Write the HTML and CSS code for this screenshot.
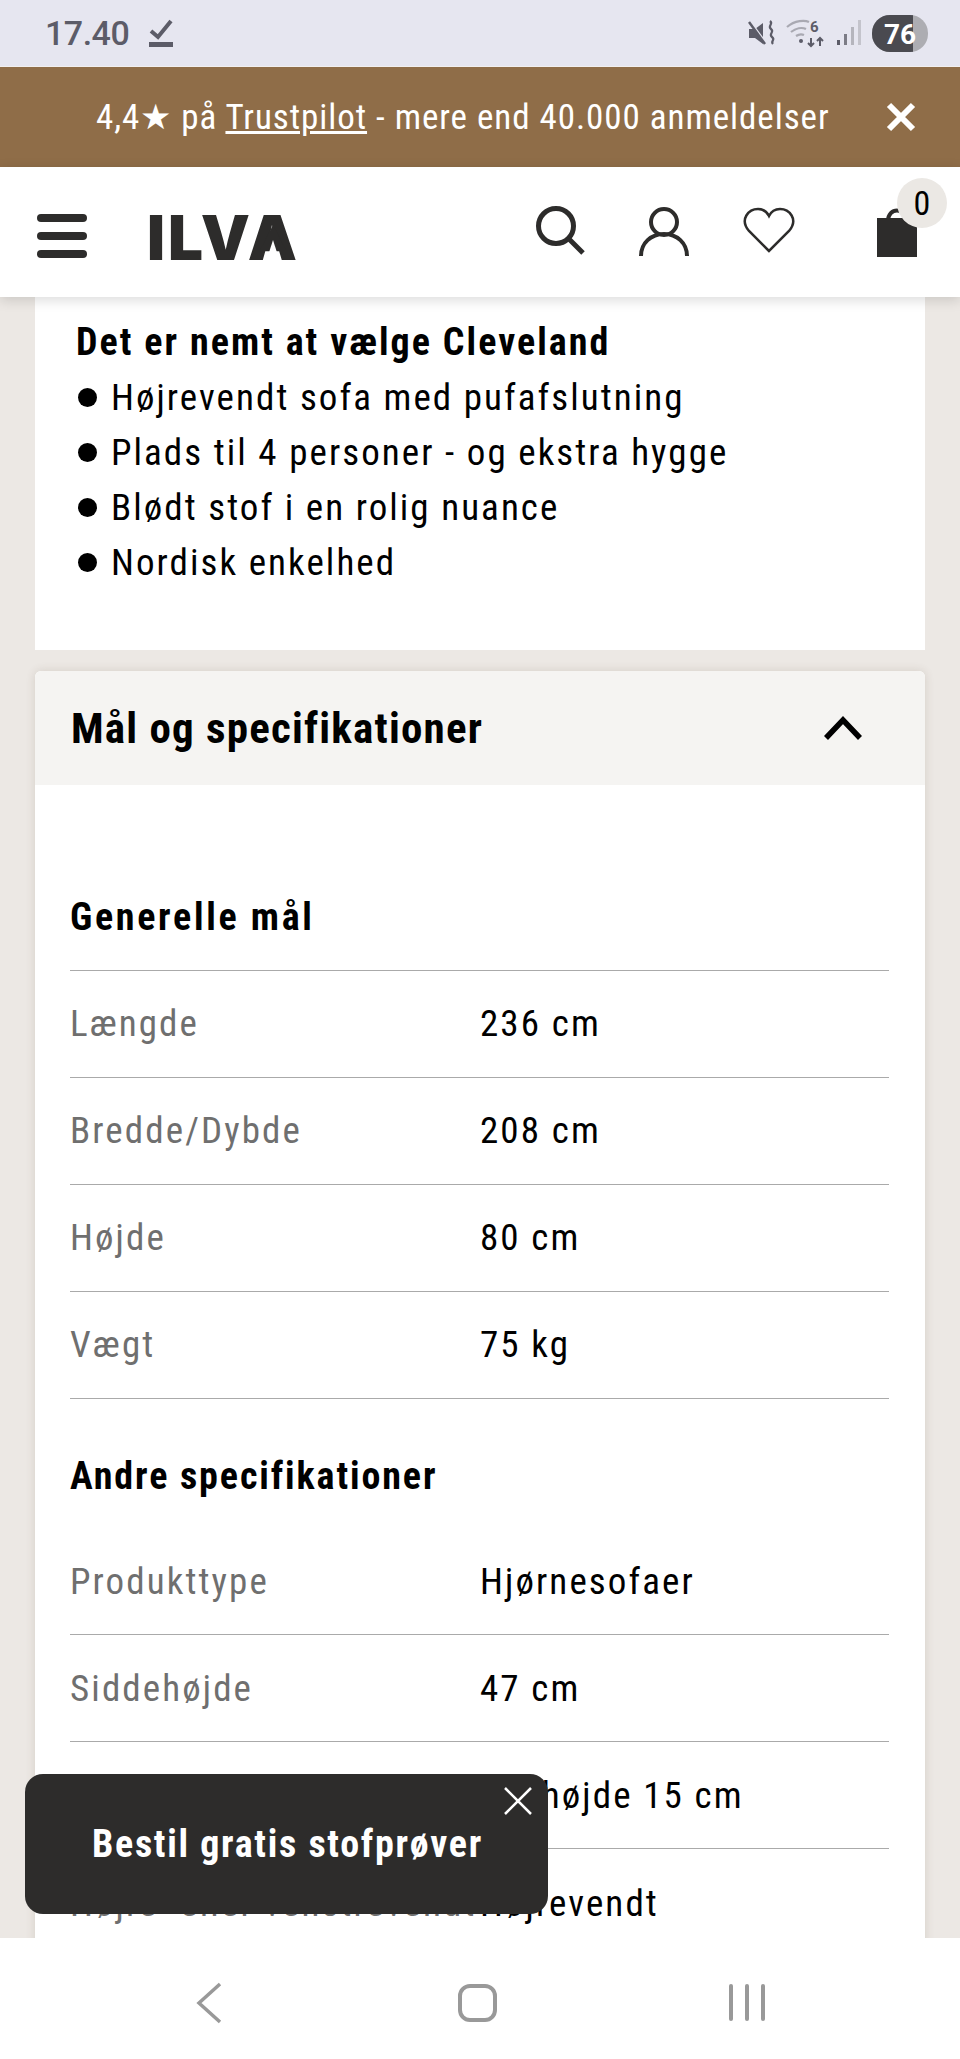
FILE: index.html
```html
<!DOCTYPE html>
<html lang="da">
<head>
    <meta charset="UTF-8">
    <title>ILVA - Cleveland</title>
    <link rel="stylesheet" href="styles.css">
</head>
<body>
<div class="page">
    <div class="statusbar">
        <div class="status-left">
            <span class="time">17.40</span>
            <svg class="status-check" width="26" height="30" viewBox="0 0 26 30"><path d="M3 13l7 6L23 3" fill="none" stroke="#5c5c68" stroke-width="4"/><rect x="1" y="24" width="24" height="5" fill="#5c5c68"/></svg>
        </div>
        <div class="status-right">
            <svg width="28" height="28" viewBox="0 0 28 28"><path d="M1 10h6l8-6v21l-8-6H1z" fill="#5c5c68"/><path d="M2 2l16 22" stroke="#e6e6f0" stroke-width="2"/><path d="M1 3l16 22" stroke="#5c5c68" stroke-width="2.5"/><path d="M22 2c4 3-3 5 1 8s-3 5 1 8-2 4 1 7" fill="none" stroke="#5c5c68" stroke-width="2.2"/></svg>
            <svg width="40" height="30" viewBox="0 0 40 30"><path d="M1 9c8-7 18-7 22-5M5 14c5-4 11-5 15-3M10 18c3-2 6-2 8-1" fill="none" stroke="#a9a9b2" stroke-width="2.2"/><circle cx="15" cy="23" r="2" fill="#5c5c68"/><path d="M25 20v8M22 25l3 3 3-3M34 28v-8M31 23l3-3 3 3" fill="none" stroke="#5c5c68" stroke-width="2"/><text x="24" y="14" class="wifi-six">6</text></svg>
            <svg width="26" height="28" viewBox="0 0 26 28"><rect x="1" y="21" width="3" height="5" fill="#5c5c68"/><rect x="8" y="15" width="3" height="11" fill="#7c7c86"/><rect x="15" y="8" width="3" height="18" fill="#b5b5bd"/><rect x="22" y="1" width="3" height="25" fill="#c4c4cc"/></svg>
            <div class="battery"><span class="battery-fill"></span><span class="battery-num">76</span></div>
        </div>
    </div>

    <div class="promo">
        <p class="promo-text">4,4★ på <a href="#">Trustpilot</a> - mere end 40.000 anmeldelser</p>
        <svg class="promo-close" width="30" height="30" viewBox="0 0 30 30"><path d="M3 3l24 24M27 3L3 27" stroke="#fff" stroke-width="6"/></svg>
    </div>

    <header class="header">
        <div class="burger"><span></span><span></span><span></span></div>
        <div class="logo">ILVA</div>
        <div class="header-icons">
            <svg class="ico-search" width="52" height="52" viewBox="0 0 52 52"><circle cx="21" cy="21" r="17.5" fill="none" stroke="#2d2c2b" stroke-width="5"/><path d="M33 33l15 15" stroke="#2d2c2b" stroke-width="5"/></svg>
            <svg class="ico-user" width="52" height="50" viewBox="0 0 52 50"><circle cx="26" cy="15" r="13" fill="none" stroke="#2d2c2b" stroke-width="4"/><path d="M3 49c0-13 10-22 23-22s23 9 23 22" fill="none" stroke="#2d2c2b" stroke-width="4"/></svg>
            <svg class="ico-heart" width="52" height="46" viewBox="0 0 52 46"><path d="M26 44L6 24C-4 12 6 2 15 2c5 0 9 3 11 7 2-4 6-7 11-7 9 0 19 10 9 22z" fill="none" stroke="#2d2c2b" stroke-width="2.5"/></svg>
            <div class="bag">
                <svg width="42" height="50" viewBox="0 0 42 50"><path d="M12 14c0-14 18-14 18 0" fill="none" stroke="#2d2c2b" stroke-width="4"/><rect x="1" y="11" width="40" height="39" fill="#2d2c2b"/></svg>
                <span class="bag-count">0</span>
            </div>
        </div>
    </header>

    <main class="content">
        <section class="card intro">
            <h4 class="intro-title">Det er nemt at vælge Cleveland</h4>
            <ul class="usp">
                <li>Højrevendt sofa med pufafslutning</li>
                <li>Plads til 4 personer - og ekstra hygge</li>
                <li>Blødt stof i en rolig nuance</li>
                <li>Nordisk enkelhed</li>
            </ul>
        </section>

        <section class="card accordion">
            <div class="acc-head">
                <h2 class="acc-title">Mål og specifikationer</h2>
                <svg width="38" height="24" viewBox="0 0 38 24"><path d="M2 22L19 4l17 18" fill="none" stroke="#000" stroke-width="5.5"/></svg>
            </div>
            <div class="acc-body">
                <h3 class="spec-title first">Generelle mål</h3>
                <div class="spec-row"><span class="spec-label">Længde</span><span class="spec-value">236 cm</span></div>
                <div class="spec-row"><span class="spec-label">Bredde/Dybde</span><span class="spec-value">208 cm</span></div>
                <div class="spec-row"><span class="spec-label">Højde</span><span class="spec-value">80 cm</span></div>
                <div class="spec-row"><span class="spec-label">Vægt</span><span class="spec-value">75 kg</span></div>
                <h3 class="spec-title second">Andre specifikationer</h3>
                <div class="spec-row"><span class="spec-label">Produkttype</span><span class="spec-value">Hjørnesofaer</span></div>
                <div class="spec-row"><span class="spec-label">Siddehøjde</span><span class="spec-value">47 cm</span></div>
                <div class="spec-row"><span class="spec-label">Ben</span><span class="spec-value">Benhøjde 15 cm</span></div>
                <div class="spec-row"><span class="spec-label">Højre- eller venstrevendt</span><span class="spec-value">Højrevendt</span></div>
            </div>
        </section>

        <div class="toast">
            <span class="toast-text">Bestil gratis stofprøver</span>
            <svg class="toast-close" width="30" height="30" viewBox="0 0 30 30"><path d="M2 2l26 26M28 2L2 28" stroke="#fff" stroke-width="2.5"/></svg>
        </div>
    </main>

    <nav class="navbar">
        <svg width="26" height="42" viewBox="0 0 26 42"><path d="M24 2L3 21l21 19" fill="none" stroke="#999" stroke-width="3.5"/></svg>
        <div class="nav-home"></div>
        <div class="nav-recent"><span></span><span></span><span></span></div>
    </nav>
</div>
</body>
</html>
```

FILE: styles.css
```css
*{
    box-sizing: border-box;
}
body{
    margin: 0px;
    font-family: Roboto, "Liberation Sans", sans-serif;
    font-stretch: 75%;
    color: #000;
}
.page{
    width: 960px;
    height: 2059px;
    display: flex;
    flex-direction: column;
    overflow: hidden;
}

/* phone status bar */
.statusbar{
    height: 67px;
    background-color: #e6e6f0;
    border-bottom: 1px solid #f2f0f0;
    display: flex;
    justify-content: space-between;
    align-items: center;
    padding: 0px 32px 0px 45px;
    font-stretch: 100%;
}
.status-left{
    display: flex;
    align-items: center;
    gap: 19px;
}
.time{
    font-family: Roboto, sans-serif;
    font-size: 34px;
    font-weight: 500;
    color: #5c5c68;
    letter-spacing: -0.5px;
}
.status-right{
    display: flex;
    align-items: center;
    gap: 10px;
}
.wifi-six{
    font-family: Roboto, sans-serif;
    font-size: 15px;
    font-weight: 700;
    fill: #5c5c68;
}
.battery{
    position: relative;
    width: 56px;
    height: 37px;
    border-radius: 18px;
    background-color: #adadb2;
    overflow: hidden;
}
.battery-fill{
    position: absolute;
    left: 0px;
    top: 0px;
    bottom: 0px;
    width: 41px;
    background-color: #4a4a50;
}
.battery-num{
    position: absolute;
    left: 12px;
    top: 3px;
    font-family: Roboto, sans-serif;
    font-size: 28px;
    font-weight: 700;
    color: #fff;
}

/* brown promo bar */
.promo{
    height: 100px;
    background-color: #8f6d48;
    display: flex;
    align-items: center;
    padding: 0px 44px 0px 96px;
    justify-content: space-between;
    color: #fff;
}
.promo-text{
    margin: 0px;
    font-size: 35px;
    letter-spacing: 0.95px;
    white-space: nowrap;
}
.promo-text a{
    color: #fff;
}
.promo-close{
    flex-shrink: 0;
}

/* main header */
.header{
    height: 130px;
    background-color: #fff;
    display: flex;
    align-items: center;
    padding: 0px 37px;
    box-shadow: 0px 3px 12px rgba(0, 0, 0, 0.15);
    position: relative;
    z-index: 2;
}
.burger{
    width: 50px;
    display: flex;
    flex-direction: column;
    gap: 10px;
    margin-top: 8px;
}
.burger span{
    height: 8px;
    border-radius: 4px;
    background-color: #2d2c2b;
}
.logo{
    position: relative;
    margin-left: 60px;
    margin-top: 12px;
    font-family: Inter, "Liberation Sans", sans-serif;
    font-stretch: 100%;
    font-size: 62px;
    font-weight: 900;
    line-height: 62px;
    color: #2d2c2b;
    letter-spacing: 3px;
}
/* the logo's A has no crossbar, only a notch at the foot */
.logo::before{
    content: "";
    position: absolute;
    left: 113px;
    top: 18px;
    width: 26px;
    height: 25px;
    background-color: #2d2c2b;
    clip-path: polygon(50% 0%, 100% 100%, 0% 100%);
}
.logo::after{
    content: "";
    position: absolute;
    left: 119px;
    top: 33px;
    width: 14px;
    height: 22px;
    background-color: #fff;
    clip-path: polygon(50% 0%, 100% 100%, 0% 100%);
}
.header-icons{
    margin-left: auto;
    display: flex;
    align-items: flex-end;
    height: 50px;
}
.ico-search{
    margin-right: 51px;
}
.ico-user{
    margin-right: 53px;
}
.ico-heart{
    margin-right: 81px;
    margin-bottom: 4px;
}
.bag{
    position: relative;
    width: 42px;
    height: 50px;
    margin-right: 5px;
}
.bag-count{
    position: absolute;
    left: 21px;
    top: -29px;
    width: 50px;
    height: 50px;
    border-radius: 50%;
    background-color: #ebe8e4;
    text-align: center;
    line-height: 50px;
    font-size: 34px;
}

/* page content */
.content{
    flex: 1;
    position: relative;
    overflow: hidden;
    background-color: #ece8e4;
    padding: 0px 35px;
}
.card{
    background-color: #fff;
}
.intro{
    height: 353px;
    padding: 18px 41px 0px;
    margin-bottom: 21px;
}
.intro-title{
    margin: 0px;
    font-size: 38px;
    line-height: 55px;
    font-weight: bold;
    letter-spacing: 2.05px;
}
.usp{
    margin: 0px;
    padding: 0px;
    list-style: none;
}
.usp li{
    font-size: 37px;
    line-height: 55px;
    letter-spacing: 2.05px;
    display: flex;
    align-items: center;
}
.usp li::before{
    content: "";
    width: 19px;
    height: 19px;
    border-radius: 50%;
    background-color: #000;
    margin: 0px 14px 0px 2px;
}

.accordion{
    border-radius: 6px 6px 0px 0px;
    box-shadow: 0px 0px 10px rgba(90, 70, 50, 0.16);
}
.acc-head{
    height: 114px;
    background-color: #f5f4f2;
    border-radius: 6px 6px 0px 0px;
    display: flex;
    justify-content: space-between;
    align-items: center;
    padding: 0px 63px 0px 36px;
}
.acc-title{
    margin: 0px;
    font-size: 43px;
    font-weight: bold;
    letter-spacing: 1.2px;
}
.acc-body{
    padding: 79px 36px 0px 35px;
}
.spec-title{
    margin: 25px 0px 0px;
    height: 104px;
    line-height: 105px;
    font-size: 38px;
    font-weight: bold;
    letter-spacing: 1.9px;
}
.spec-title.first{
    margin-top: 0px;
    height: 107px;
    line-height: 107px;
    border-bottom: 1px solid #aaa;
    letter-spacing: 2.7px;
}
.spec-row{
    display: grid;
    grid-template-columns: 410px 1fr;
    align-items: center;
    height: 107px;
    padding-bottom: 2px;
    border-bottom: 1px solid #aaa;
    font-size: 37px;
    letter-spacing: 2.1px;
    white-space: nowrap;
}
.second ~ .spec-row{
    padding-bottom: 0px;
}
.second ~ .spec-row:last-child{
    padding-top: 3px;
}
.spec-label{
    color: #6f6f6f;
}

/* floating sample button */
.toast{
    position: absolute;
    left: 25px;
    top: 1477px;
    width: 523px;
    height: 140px;
    border-radius: 18px;
    background-color: #2d2c2b;
    color: #fff;
    font-size: 38px;
    font-weight: bold;
    letter-spacing: 1.7px;
    display: flex;
    align-items: center;
    padding-left: 67px;
    white-space: nowrap;
}
.toast-close{
    position: absolute;
    right: 15px;
    top: 12px;
}

/* phone nav bar */
.navbar{
    height: 121px;
    background-color: #fff;
    position: relative;
    display: flex;
    align-items: center;
    padding-left: 196px;
    padding-top: 8px;
}
.nav-home{
    width: 39px;
    height: 38px;
    border: 4px solid #999;
    border-radius: 12px;
    margin-left: 236px;
}
.nav-recent{
    display: flex;
    gap: 12px;
    margin-left: 232px;
}
.nav-recent span{
    width: 4px;
    height: 37px;
    border-radius: 2px;
    background-color: #999;
}
```
